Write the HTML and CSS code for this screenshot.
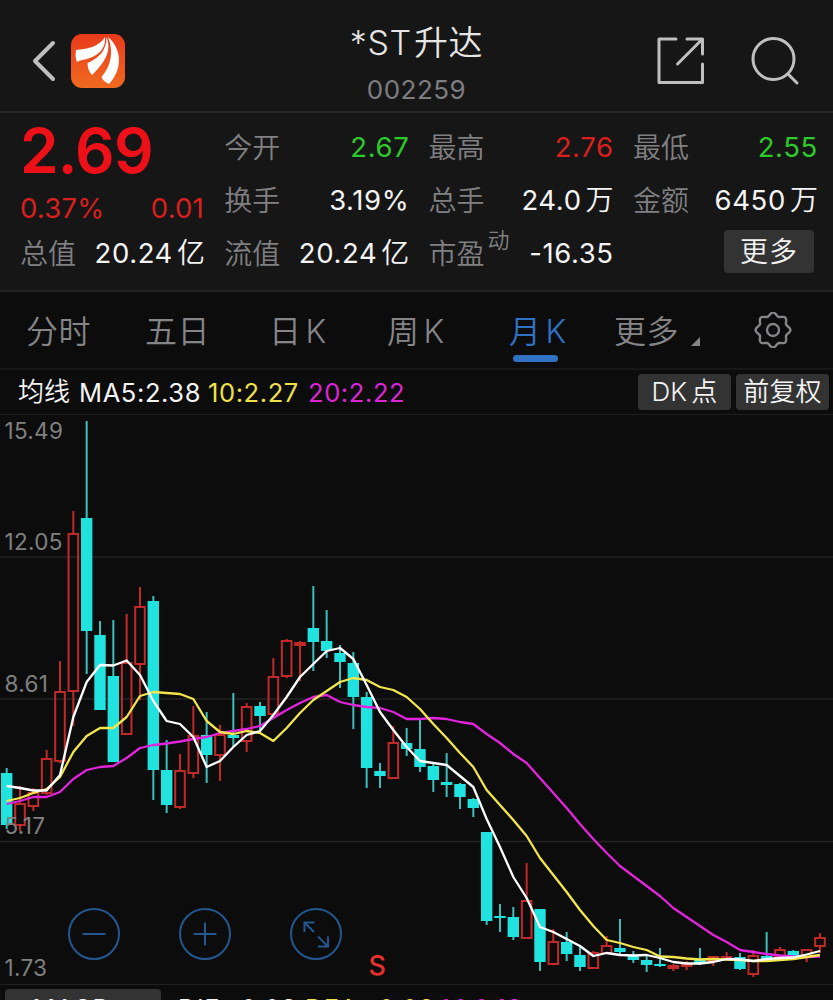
FILE: index.html
```html
<!DOCTYPE html>
<html lang="zh-CN">
<head>
    <meta charset="UTF-8">
    <title>*ST升达 002259</title>
    <link rel="stylesheet" href="styles.css">
</head>
<body>
    <header class="topbar">
        <div class="topbar-left">
            <svg class="back" width="24" height="42" viewBox="0 0 24 42"><path d="M21 3 L3 21 L21 39"/></svg>
            <svg class="logo" width="54" height="54" viewBox="0 0 54 54">
                <defs>
                    <linearGradient id="logoBg" x1="0" y1="0" x2="0" y2="1">
                        <stop offset="0" stop-color="#e93a1c"/>
                        <stop offset="1" stop-color="#ef6a20"/>
                    </linearGradient>
                </defs>
                <rect width="54" height="54" rx="11" fill="url(#logoBg)"/>
                <path fill="#fff" d="M5 16 C16 15 28 13 34 3 C35 12 30 20 19 24 C13 26 9 26 6 28 C4.500 25 4.300 20 5 16Z"/>
                <path fill="#fff" d="M35.500 3 C40 14 37 26 21 41 C18 38 16.500 34 16.500 29 C27 25 36 16 35.500 3Z"/>
                <path fill="#fff" d="M37 3 C51 15 52 35 38 50 C34 48 31.500 46 30.500 43 C40 32 43 18 37 3Z"/>
            </svg>
        </div>
        <div class="title">
            <h1>*ST<span class="zh">升达</span></h1>
            <p>002259</p>
        </div>
        <div class="topbar-right">
            <svg width="50" height="50" viewBox="0 0 50 50"><path d="M20 3 H3 V46.500 H46.500 V28 M31 3 H46.500 V18 M46 3.500 L21.500 28"/></svg>
            <svg width="50" height="50" viewBox="0 0 50 50"><circle cx="23.500" cy="23" r="20.500"/><path d="M38 38 L47 47"/></svg>
        </div>
    </header>

    <section class="quote">
        <div class="col">
            <div class="price">2.69</div>
            <div class="change red"><span>0.37%</span><span>0.01</span></div>
            <div class="item"><label>总值</label><b>20.24<i>亿</i></b></div>
        </div>
        <div class="col">
            <div class="item"><label>今开</label><b class="green">2.67</b></div>
            <div class="item"><label>换手</label><b>3.19%</b></div>
            <div class="item"><label>流值</label><b>20.24<i>亿</i></b></div>
        </div>
        <div class="col">
            <div class="item"><label>最高</label><b class="red">2.76</b></div>
            <div class="item"><label>总手</label><b>24.0<i>万</i></b></div>
            <div class="item"><label>市盈<sup>动</sup></label><b>-16.35</b></div>
        </div>
        <div class="col">
            <div class="item"><label>最低</label><b class="green">2.55</b></div>
            <div class="item"><label>金额</label><b>6450<i>万</i></b></div>
            <div class="item end"><button class="more">更多</button></div>
        </div>
    </section>

    <nav class="tabs">
        <a>分时</a>
        <a>五日</a>
        <a>日<span>K</span></a>
        <a>周<span>K</span></a>
        <a class="active">月<span>K</span></a>
        <a class="drop">更多</a>
        <svg class="gear" width="38" height="36" viewBox="-19 -18 38 36">
            <path id="gear"/>
            <circle r="6"/>
        </svg>
    </nav>

    <div class="ma">
        <span class="ma-name">均线</span>
        <span class="ma5">MA5:2.38</span>
        <span class="ma10">10:2.27</span>
        <span class="ma20">20:2.22</span>
        <div class="ma-buttons">
            <button>DK<span>点</span></button>
            <button>前复权</button>
        </div>
    </div>

    <main class="chart">
        <svg id="kline" width="833" height="570" viewBox="0 415 833 570"></svg>
        <div class="zoom">
            <svg width="52" height="52" viewBox="0 0 52 52"><circle cx="26" cy="26" r="25"/><path d="M14.500 26 H37.500"/></svg>
            <svg width="52" height="52" viewBox="0 0 52 52"><circle cx="26" cy="26" r="25"/><path d="M14.500 26 H37.500 M26 14.500 V37.500"/></svg>
            <svg width="52" height="52" viewBox="0 0 52 52"><circle cx="26" cy="26" r="25"/><path d="M24 24 L14.500 14.500 M14.500 24 V14.500 H24.500 M28 28.500 L38 38.500 M38 28.500 V38.500 H28"/></svg>
        </div>
    </main>

    <footer class="macd">
        <button>MACD</button>
        <span class="dif">DIF:-0.03</span>
        <span class="ma10">DEA:-0.09</span>
        <span class="ma20">M:0.12</span>
    </footer>

    <script src="chart.js"></script>
</body>
</html>
```

FILE: styles.css
```css
* { box-sizing: border-box; }
body { margin: 0; width: 833px; height: 1000px; overflow: hidden; background: #0c0c0c; color: #f4f4f4; font-family: Inter, "Noto Sans CJK SC", sans-serif; font-weight: 400; }
h1, p { margin: 0; font-weight: 400; }
button { border: 0; padding: 0; background: #333; color: #f4f4f4; font-family: inherit; font-weight: 350; border-radius: 4px; white-space: nowrap; }
svg { display: block; flex: none; }
.red { color: #d9201f; }
.green { color: #2ccb2c; }

/* top bar */
.topbar { height: 113px; display: grid; grid-template-columns: 1fr 200px 1fr; background: #161616; border-bottom: 2px solid #242424; }
.topbar-left { display: flex; align-items: center; gap: 15px; padding: 10px 0 0 32px; }
.topbar-left .back { width: 24px; }
.back path { fill: none; stroke: #bfbfbf; stroke-width: 4; stroke-linecap: round; stroke-linejoin: round; }
.title { text-align: center; padding-top: 22px; }
.title h1 { font-size: 34px; line-height: 42px; letter-spacing: 0.700px; color: #e6e6e6; font-weight: 350; }
.title .zh { margin-left: 2px; }
.title p { font-size: 26px; line-height: 32px; margin-top: 10px; letter-spacing: 0.500px; color: #7d7d80; }
.topbar-right { display: flex; justify-content: flex-end; align-items: center; gap: 44px; padding: 10px 33px 0 0; }
.topbar-right svg { fill: none; stroke: #bfbfbf; stroke-width: 3; stroke-linejoin: round; stroke-linecap: round; }

/* quote block */
.quote { height: 179px; display: grid; grid-template-columns: repeat(4, 183px); column-gap: 21.300px; padding: 7px 0 0 21px; background: #161616; border-bottom: 2px solid #222; }
.col { min-width: 0; }
.item { height: 53px; display: flex; align-items: center; justify-content: space-between; white-space: nowrap; line-height: 40px; }
.item label { position: relative; top: 1px; left: -1px; font-size: 28px; color: #808083; font-weight: 350; }
.item b { font-size: 27.500px; font-weight: 400; letter-spacing: 0.600px; margin-right: -1px; }
.item i { font-style: normal; font-weight: 350; margin-left: 4px; font-size: 28px; letter-spacing: 0; }
.item sup { position: absolute; left: 59px; top: -9px; font-size: 22px; line-height: 30px; }
.item.end { justify-content: flex-end; }
.more { width: 90px; height: 43px; font-size: 28px; line-height: 40px; letter-spacing: 1px; margin: -2px 3px 0 0; }
.price { height: 60px; font-size: 62px; line-height: 62px; letter-spacing: -0.800px; margin-left: -1px; font-weight: 600; color: #ee1019; }
.change { height: 46px; display: flex; justify-content: space-between; align-items: center; font-size: 27.500px; letter-spacing: 0.200px; padding-top: 10px; margin-left: -1px; }

/* period tabs */
.tabs { height: 78px; display: flex; align-items: center; border-bottom: 2px solid #171717; padding: 0 0 2px 26px; font-size: 32px; font-weight: 350; color: #858588; }
.tabs a { position: relative; width: 65px; margin-right: 54px; white-space: nowrap; letter-spacing: 0.500px; }
.tabs a span { margin-left: 4px; }
.tabs a:nth-child(3) { margin: 0 53px 0 5px; }
.tabs a:nth-child(5) { margin: 0 40px 0 3px; }
.tabs .active { color: #2f72c4; }
.tabs .active::after { content: ""; position: absolute; left: 4px; bottom: -10px; width: 45px; height: 7px; border-radius: 4px; background: #2f72c4; }
.tabs .drop::after { content: ""; position: absolute; right: -21px; bottom: 6px; border-left: 9px solid transparent; border-bottom: 9px solid #858588; }
.gear { fill: none; stroke: #858588; stroke-width: 2.400; margin-left: 21px; margin-top: 2px; }

/* moving averages */
.ma { height: 45px; display: flex; align-items: center; border-bottom: 1px solid #202020; padding: 0 4px 0 18px; font-size: 25.500px; letter-spacing: 0.600px; white-space: nowrap; }
.ma-name { width: 61px; font-size: 26px; line-height: 36px; letter-spacing: 0; font-weight: 350; }
.ma5 { width: 129px; }
.ma10 { color: #efe04a; }
.ma .ma10 { width: 100px; }
.ma20 { color: #dc26d6; }
.ma-buttons { margin-left: auto; display: flex; gap: 5px; }
.ma-buttons button { width: 93px; height: 36px; font-size: 26px; line-height: 36px; letter-spacing: 0.200px; }
.ma-buttons span { margin-left: 4px; }

/* k-line */
.chart { position: relative; height: 569px; }
.grid-line { stroke: #232323; stroke-width: 1.500; }
.axis { fill: #808080; font-size: 22.500px; letter-spacing: 0.300px; }
.up { fill: none; stroke: #c12a28; stroke-width: 2; }
.up-solid { fill: #d9201f; stroke: #c12a28; stroke-width: 2; }
.down { fill: #20e3df; stroke: #3cbfbc; stroke-width: 2; }
.down rect { stroke: none; }
.line { fill: none; stroke-width: 2.300; stroke-linejoin: round; }
.sell { fill: #e5302c; font-size: 27px; font-weight: 500; }
.zoom { position: absolute; left: 68px; top: 493px; display: flex; gap: 59px; }
.zoom svg { fill: none; stroke: #24578f; stroke-width: 2; }

/* macd strip */
.macd { height: 60px; display: flex; align-items: flex-start; padding: 4px 5px 0; font-size: 25px; letter-spacing: 0.900px; border-top: 1px solid #202020; white-space: nowrap; }
.macd button { width: 156px; height: 38px; padding: 2px 22px 0 0; font-size: 25px; letter-spacing: 0.900px; margin-right: 17px; font-weight: 400; }
.macd span { line-height: 41px; }
.macd .dif { width: 127px; }
.macd .ma10 { width: 137px; }
```

FILE: chart.js
```js
// one row per month: type (u = up, f = up with solid body, d = down), body top, body bottom, high, low
const candles = [
    ['d',773,825,768,829],['u',804,825,786,831],['u',793,806,788,811],['u',759,793,750,795],['u',692,761,661,763],
    ['u',534,691,511,726],['d',518,631,421,674],['d',635,710,621,710],['d',676,762,620,762],['u',663,734,614,734],
    ['u',607,664,587,700],['d',601,770,596,800],['d',770,805,740,813],['u',771,807,754,809],['u',736,773,706,778],
    ['d',735,755,712,783],['u',735,755,725,781],['d',735,738,693,747],['u',707,741,703,752],['d',706,716,702,733],
    ['u',677,714,658,714],['u',641,676,639,678],['f',643,645,641,681],['d',628,642,586,671],['d',641,651,610,658],
    ['d',653,662,645,688],['d',663,697,652,729],['d',697,768,692,788],['d',771,776,763,788],['u',743,778,726,779],
    ['d',743,749,728,756],['d',749,767,720,772],['d',766,780,763,792],['d',782,785,753,797],['d',784,797,783,809],
    ['d',799,808,798,817],['d',832,921,832,925],['d',916,918,904,932],['d',917,937,907,940],['u',901,938,863,939],
    ['d',909,962,909,971],['u',942,964,929,964],['d',942,954,932,961],['d',955,967,947,971],['u',953,968,951,968],
    ['u',946,953,936,953],['d',948,952,919,955],['d',956,960,951,963],['d',960,965,955,972],['d',964,966,948,967],
    ['f',966,968,964,971],['f',964,966,961,970],['d',960,963,948,965],['u',957,961,956,966],['f',957,959,952,960],
    ['d',957,969,953,970],['u',956,974,950,977],['d',956,959,932,960],['u',950,957,947,957],['d',951,957,950,957],
    ['u',950,957,949,962],['u',938,946,933,953]
];

const lines = {
    '#e224dc': [804,801,797,797,792,779,770,767,766,758,748,745,743.5,741.5,739,737,733,731,729,726,718,710,703,697,695,702,705,707,708,712,719,719,718,719,722,724,734,743,754,763,778,793,808,824,839,853,866,876,886,896,908,917,926,935,942,950,952,954,955.5,956.5,957,956.5],
    '#f3e64d': [801,798,793,789,777,752,736,728,728,717,696,692,693,694,699,721,732,734,731,733,741,728,713,700,691,682,678,680,687,690,697,709,724,738,753,767,790,805,820,836,858,875,892,910,926,940,943,947,950,956.5,957,958.5,959.5,959,959.5,960,961,961,960,959,957,955],
    '#ffffff': [786,788,790.5,790.5,775,717,682,665,665.5,660.5,675,701,721,724,737,767,761,747,735,731,715,697,677,664,651,648,659,685,712,730,747,761,763,765,776,787,819,847,877,898,927,932,939,946,956,953,955,955.5,955,958,962,963.5,963.5,962,959,959.5,961,959,958,957.5,954.5,951]
};

const step = 13.333;
const xAt = i => step / 2 + i * step;
let out = '';

[557, 699, 841.5].forEach(y => {
    out += `<path class="grid-line" d="M0 ${y} H833"/>`;
});

candles.forEach(([type, top, bottom, high, low], i) => {
    const x = xAt(i);
    const wick = `<path d="M${x} ${high} V${top} M${x} ${bottom} V${low}"/>`;
    if (type === 'd') {
        out += `<g class="down">${wick}<rect x="${x - 5.7}" y="${top}" width="11.4" height="${bottom - top}"/></g>`;
    } else {
        out += `<g class="${type === 'f' ? 'up-solid' : 'up'}">${wick}<rect x="${x - 4.8}" y="${top}" width="9.6" height="${bottom - top}"/></g>`;
    }
});

[['15.49', 439], ['12.05', 550], ['8.61', 692], ['5.17', 834], ['1.73', 976]].forEach(([text, y]) => {
    out += `<text class="axis" x="4.5" y="${y}">${text}</text>`;
});

for (const color in lines) {
    out += `<polyline class="line" stroke="${color}" points="${lines[color].map((y, i) => xAt(i) + ',' + y).join(' ')}"/>`;
}
out += '<text class="sell" x="368.500" y="975">S</text>';
document.getElementById('kline').innerHTML = out;

// gear outline with eight soft teeth
let gear = '';
for (let a = 0; a < 360; a += 4) {
    const t = a * Math.PI / 180;
    const r = 15.8 + 1.6 * Math.cos(8 * t);
    gear += (a ? 'L' : 'M') + (r * Math.cos(t)).toFixed(2) + ' ' + (r * Math.sin(t)).toFixed(2);
}
document.getElementById('gear').setAttribute('d', gear + 'Z');
```
